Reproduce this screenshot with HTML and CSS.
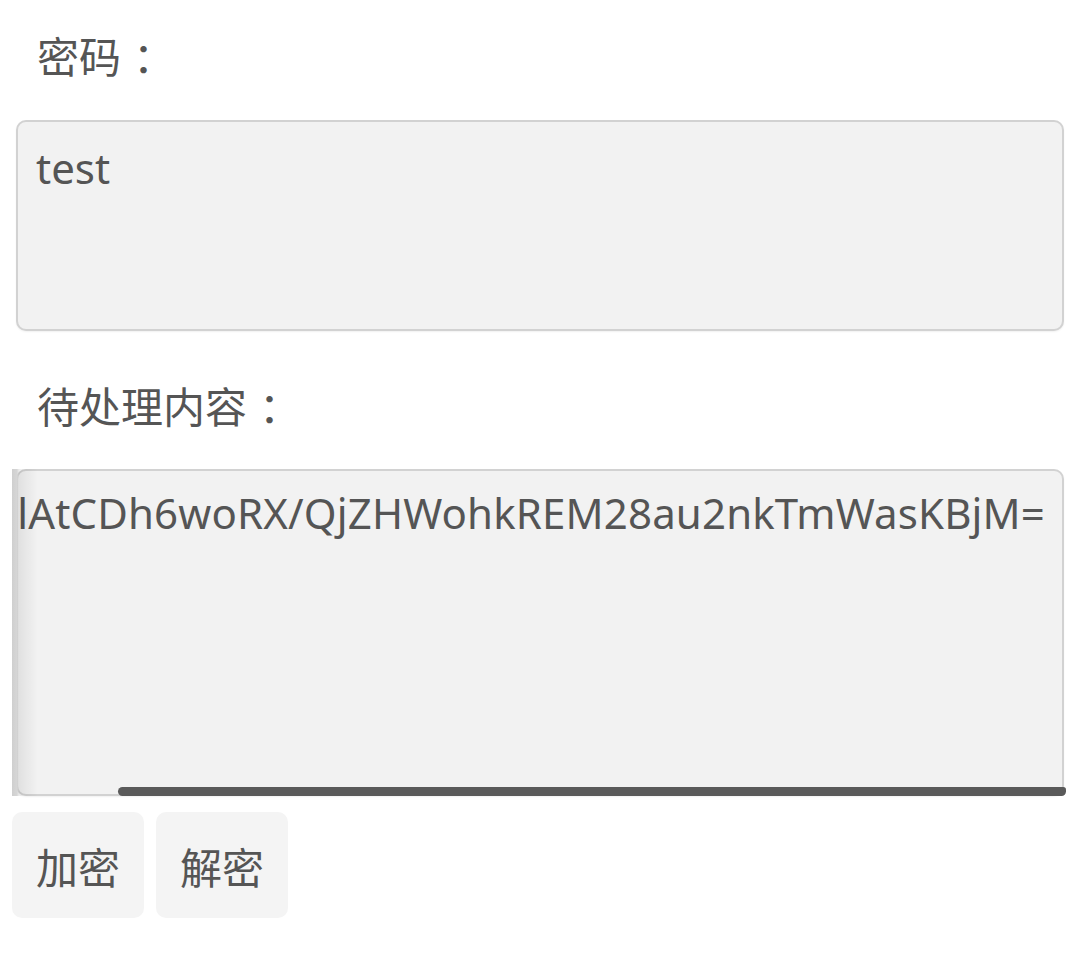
FILE: index.html
```html
<!DOCTYPE html>
<html lang="zh-CN">
<head>
<meta charset="utf-8">
<title>加密解密</title>
<link rel="stylesheet" href="styles.css">
</head>
<body>
<main class="form">
  <label class="label" for="pwd">密码<span class="colon">：</span></label>
  <textarea id="pwd" class="field field-pwd">test</textarea>
  <div class="label label-content">待处理内容<span class="colon">：</span></div>
  <div class="field field-content">
    <div class="scroller"><span class="line">U2FsdGVkX19Kp3vHo0lAtCDh6woRX/QjZHWohkREM28au2nkTmWasKBjM=</span></div>
    <div class="glow"></div>
    <div class="thumb"></div>
  </div>
  <div class="actions">
    <button class="btn" type="button">加密</button>
    <button class="btn" type="button">解密</button>
  </div>
</main>
</body>
</html>
```
FILE: styles.css
```css
html, body {
  margin: 0;
  padding: 0;
  background: #ffffff;
}
body {
  font-family: "Noto Sans", "Noto Sans CJK SC", sans-serif;
  font-size: 42px;
  color: #555555;
}
.form {
  display: flex;
  flex-direction: column;
  align-items: flex-start;
  padding: 27px 14px 0 12px;
}
.label {
  display: block;
  padding-left: 25px;
  line-height: 60px;
  height: 60px;
}
.colon {
  display: inline-block;
  padding-left: 12px;
}
.label-content {
  margin-top: 46px;
}
.field {
  box-sizing: border-box;
  margin-left: 4px;
  width: 1048px;
  background: #f2f2f2;
  border: 2px solid #d2d2d2;
  border-radius: 10px;
  box-shadow: 0 1px 2px rgba(0, 0, 0, 0.06);
  font: inherit;
  color: #555555;
  line-height: 60px;
}
.field-pwd {
  margin-top: 33px;
  height: 211px;
  padding: 16px 18px;
  resize: none;
  outline: none;
  display: block;
  overflow: hidden;
}
.field-content {
  position: relative;
  margin-top: 32px;
  height: 327px;
  padding: 12px 17px 0 0;
}
.scroller {
  display: flex;
  justify-content: flex-end;
  overflow: hidden;
  white-space: nowrap;
}
.line {
  flex: none;
  letter-spacing: 0.15px;
}
.glow {
  position: absolute;
  left: -6px;
  top: -2px;
  bottom: -2px;
  width: 28px;
  background: linear-gradient(to right, #cfcfcf 0, #d6d6d6 5px, rgba(0,0,0,0.07) 7px, rgba(0,0,0,0) 26px);
  pointer-events: none;
}
.thumb {
  position: absolute;
  left: 100px;
  right: -4px;
  bottom: -2px;
  height: 9px;
  background: #5a5a5a;
  border-radius: 5px 3px 5px 5px;
}
.actions {
  display: flex;
  gap: 12px;
  margin-top: 16px;
}
.btn {
  width: 132px;
  height: 106px;
  padding: 6px 0 0;
  border: none;
  border-radius: 10px;
  background: #f4f4f4;
  font: inherit;
  color: #555555;
  line-height: 60px;
}
```
